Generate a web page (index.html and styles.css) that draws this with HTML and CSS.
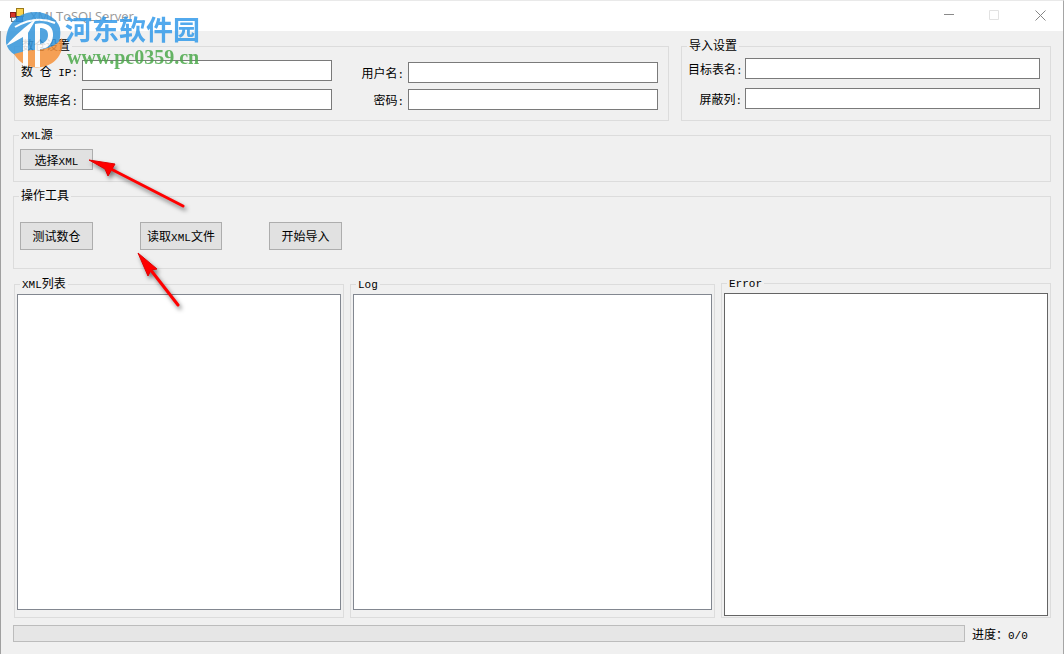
FILE: index.html
```html
<!DOCTYPE html>
<html lang="zh-CN">
<head>
<meta charset="utf-8">
<title>XMLToSQLServer</title>
<link rel="stylesheet" href="styles.css">
</head>
<body>
<div class="window">
  <header class="titlebar">
    <svg class="app-icon" width="16" height="16" viewBox="0 0 16 16" aria-hidden="true">
      <rect x="6.500" y=".5" width="7" height="8" fill="#fbd34c" stroke="#9a7a1c"/>
      <rect x=".5" y="4.500" width="5" height="5" fill="#d8352a" stroke="#8c1d16"/>
      <rect x="1.500" y="9.500" width="5" height="4" fill="#f4f4f4" stroke="#777"/>
      <rect x="6.500" y="8.500" width="6" height="5" fill="#4a82dc" stroke="#2b4f93"/>
    </svg>
    <h1 class="title">XMLToSQLServer</h1>
    <div class="controls">
      <button class="control" type="button" aria-label="最小化"><svg width="11" height="11" viewBox="0 0 11 11"><path d="M1 4.500H11" stroke="#8a8a8a" fill="none"/></svg></button>
      <button class="control" type="button" aria-label="最大化" disabled><svg width="11" height="11" viewBox="0 0 11 11"><path d="M.5 .5H9.500V9.500H.5Z" stroke="#e2e2e2" fill="none"/></svg></button>
      <button class="control" type="button" aria-label="关闭"><svg width="11" height="11" viewBox="0 0 11 11"><path d="M.5 .5L10.500 10.500M10.500 .5L.5 10.500" stroke="#858585" fill="none"/></svg></button>
    </div>
  </header>

  <main class="content">
    <div class="settings">
      <fieldset class="group settings-group">
        <legend class="legend">数仓设置</legend>
        <div class="columns">
          <div class="fields fields-server">
            <label class="label" for="ip">数<span class="latin"> </span>仓<span class="latin"> IP:</span></label>
            <input class="text" id="ip" type="text">
            <label class="label" for="db">数据库名<span class="latin">:</span></label>
            <input class="text" id="db" type="text">
          </div>
          <div class="fields fields-login">
            <label class="label" for="user">用户名<span class="latin">:</span></label>
            <input class="text" id="user" type="text">
            <label class="label" for="pwd">密码<span class="latin">:</span></label>
            <input class="text" id="pwd" type="password">
          </div>
        </div>
      </fieldset>
      <fieldset class="group settings-group">
        <legend class="legend">导入设置</legend>
        <div class="fields fields-import">
          <label class="label" for="table">目标表名<span class="latin">:</span></label>
          <input class="text" id="table" type="text">
          <label class="label" for="skip">屏蔽列<span class="latin">:</span></label>
          <input class="text" id="skip" type="text">
        </div>
      </fieldset>
    </div>

    <fieldset class="group source">
      <legend class="legend"><span class="latin">XML</span>源</legend>
      <button class="button" type="button">选择<span class="latin">XML</span></button>
    </fieldset>

    <fieldset class="group tools">
      <legend class="legend">操作工具</legend>
      <div class="toolbar">
        <button class="button tall" type="button">测试数仓</button>
        <button class="button tall wide" type="button">读取<span class="latin">XML</span>文件</button>
        <button class="button tall" type="button">开始导入</button>
      </div>
    </fieldset>

    <div class="panes">
      <fieldset class="group pane">
        <legend class="legend"><span class="latin">XML</span>列表</legend>
        <textarea class="box" aria-label="XML列表"></textarea>
      </fieldset>
      <fieldset class="group pane">
        <legend class="legend"><span class="latin">Log</span></legend>
        <textarea class="box" aria-label="Log"></textarea>
      </fieldset>
      <fieldset class="group pane pane-error">
        <legend class="legend"><span class="latin">Error</span></legend>
        <textarea class="box" aria-label="Error"></textarea>
      </fieldset>
    </div>

    <footer class="status">
      <progress class="progress" id="progress" value="0" max="100"></progress>
      <label class="status-text" for="progress">进度：<span class="latin">0/0</span></label>
    </footer>
  </main>

  <div class="watermark">
    <svg class="logo" width="62" height="62" viewBox="0 0 62 62" aria-hidden="true">
      <path d="M3 35C2 17 15 4 32 4C45 4 54 11 57 20C59 34 53 43 42 47H12C7 44 4 40 3 35Z" fill="#3596dc"/>
      <path d="M11 46C19 44 25 42 31 42C43 42 54 38 59 30C62 45 52 57 39 59C27 61 17 56 11 46Z" fill="#f7933b"/>
      <path d="M3 38C12 27 21 20 34 10C28 19 27 22 25 25V58H20V29C14 32 8 36 3 38Z" fill="#fff"/>
      <path d="M32 16C43 13 51 18 50 28C49 37 44 41 37 41V59H32ZM37 20V36C42 35 45 32 45 27C45 22 42 20 37 20Z" fill="#fff" fill-rule="evenodd"/>
      <path d="M12 19C24 12 38 9 52 15" fill="none" stroke="#fff" stroke-width="2"/>
    </svg>
    <div class="brand">
      <span class="brand-name">河东软件园</span>
      <span class="brand-url">www.pc0359.cn</span>
    </div>
  </div>

  <svg class="arrow arrow-source" width="108" height="60" viewBox="0 0 108 60" aria-hidden="true">
    <path d="M4 7L30 11L23 23L20 16Z" fill="#f00" stroke="#e00000" stroke-linejoin="round"/>
    <path d="M24 15L98 53" stroke="#f00" stroke-width="3" stroke-linecap="round"/>
  </svg>
  <svg class="arrow arrow-tools" width="54" height="64" viewBox="0 0 54 64" aria-hidden="true">
    <path d="M4 5L23 21L17 22L14 28Z" fill="#f00" stroke="#e00000" stroke-linejoin="round"/>
    <path d="M16 21L44 57" stroke="#f00" stroke-width="3" stroke-linecap="round"/>
  </svg>
</div>
</body>
</html>
```
FILE: styles.css
```css
* {
  box-sizing: border-box;
}

body {
  margin: 0;
  background: #f0f0f0;
  color: #000;
  font: 12px/14px "Noto Sans CJK SC", sans-serif;
}

button,
input,
textarea {
  font: inherit;
  color: inherit;
}

.window {
  position: relative;
  display: flex;
  flex-direction: column;
  min-height: 100vh;
  border-top: 1px solid #e9e9e9;
  border-right: 1px solid #a5a5a5;
}

.titlebar {
  display: flex;
  align-items: center;
  height: 30px;
  padding-left: 10px;
  background: #fff;
}

.app-icon {
  flex: none;
}

.title {
  flex: 1;
  margin: 0 0 0 4px;
  color: #999;
  font: 13px/18px "Open Sans", sans-serif;
}

.controls {
  display: flex;
}

.control {
  display: flex;
  justify-content: center;
  width: 46px;
  height: 30px;
  padding: 9px 0 0;
  border: 0;
  background: transparent;
}

.content {
  display: flex;
  flex: 1;
  flex-direction: column;
  padding: 9px 12px 12px;
  border-left: 1px solid #a0a0a0;
}

.latin {
  font-family: "Liberation Mono", monospace;
  font-size: 11px;
  line-height: 10px;
  white-space: pre;
}

.group {
  min-width: 0;
  margin: 0;
  padding: 0 6px;
  border: 1px solid #dcdcdc;
}

.legend {
  height: 12px;
  margin-left: -1px;
  padding: 0 2px;
  line-height: 10px;
}

.settings {
  display: grid;
  grid-template-columns: 655fr 370fr;
  gap: 12px;
  padding-left: 1px;
}

.settings-group {
  padding: 6px 10px 10px 6px;
}

.columns {
  display: grid;
  grid-template-columns: 311fr 300fr;
  gap: 26px;
}

.fields {
  display: grid;
  align-content: start;
  align-items: center;
  column-gap: 4px;
}

.fields-server {
  grid-template-columns: 57px 1fr;
  row-gap: 8px;
  padding-top: 2px;
}

.fields-login {
  grid-template-columns: 46px 1fr;
  row-gap: 6px;
  padding-top: 4px;
}

.fields-import {
  grid-template-columns: 54px 1fr;
  column-gap: 3px;
  row-gap: 9px;
}

.label {
  text-align: right;
  white-space: nowrap;
}

.text {
  width: 100%;
  min-width: 0;
  height: 21px;
  padding: 0 3px;
  border: 1px solid #7a7a7a;
  background: #fff;
}

.source {
  margin-top: 8px;
  padding: 8px 6px 11px;
}

.tools {
  margin-top: 8px;
  padding: 20px 6px 18px;
}

.toolbar {
  display: flex;
  gap: 47px;
}

.button {
  display: block;
  width: 73px;
  height: 21px;
  padding: 0;
  border: 1px solid #adadad;
  background: #e1e1e1;
  white-space: nowrap;
}

.tall {
  height: 28px;
}

.wide {
  width: 82px;
}

.panes {
  display: grid;
  flex: 1;
  grid-template-columns: 330fr 365fr 330fr;
  gap: 6px;
  margin-top: 9px;
  padding-left: 1px;
}

.pane {
  display: flex;
  flex-direction: column;
  padding: 4px 2px 7px;
}

.pane .legend {
  margin-left: 3px;
}

.pane-error {
  margin-top: -1px;
  padding-bottom: 1px;
}

.box {
  display: block;
  width: 100%;
  height: 100%;
  min-height: 60px;
  padding: 2px;
  border: 1px solid #828790;
  background: #fff;
  resize: none;
}

.pane-error .box {
  border-color: #646464;
}

.status {
  display: flex;
  align-items: center;
  gap: 7px;
  margin-top: 7px;
}

.progress {
  flex: 1;
  height: 17px;
  appearance: none;
  border: 1px solid #bcbcbc;
  background: #e6e6e6;
}

.progress::-webkit-progress-bar {
  background: #e6e6e6;
}

.status-text {
  width: 79px;
}

.watermark {
  position: absolute;
  top: 7px;
  left: 3px;
  display: flex;
  opacity: 0.85;
  pointer-events: none;
}

.brand {
  display: flex;
  flex-direction: column;
  padding-top: 6px;
  white-space: nowrap;
}

.brand-name {
  color: #349bea;
  font-size: 27px;
  font-weight: bold;
  line-height: 30px;
}

.brand-url {
  padding-left: 2px;
  color: #4ca94b;
  font: bold 20px/26px "Liberation Serif", serif;
}

.arrow {
  position: absolute;
  overflow: visible;
  filter: drop-shadow(2px 3px 2px rgba(0, 0, 0, 0.5));
  pointer-events: none;
}

.arrow-source {
  top: 152px;
  left: 85px;
}

.arrow-tools {
  top: 247px;
  left: 134px;
}
```
